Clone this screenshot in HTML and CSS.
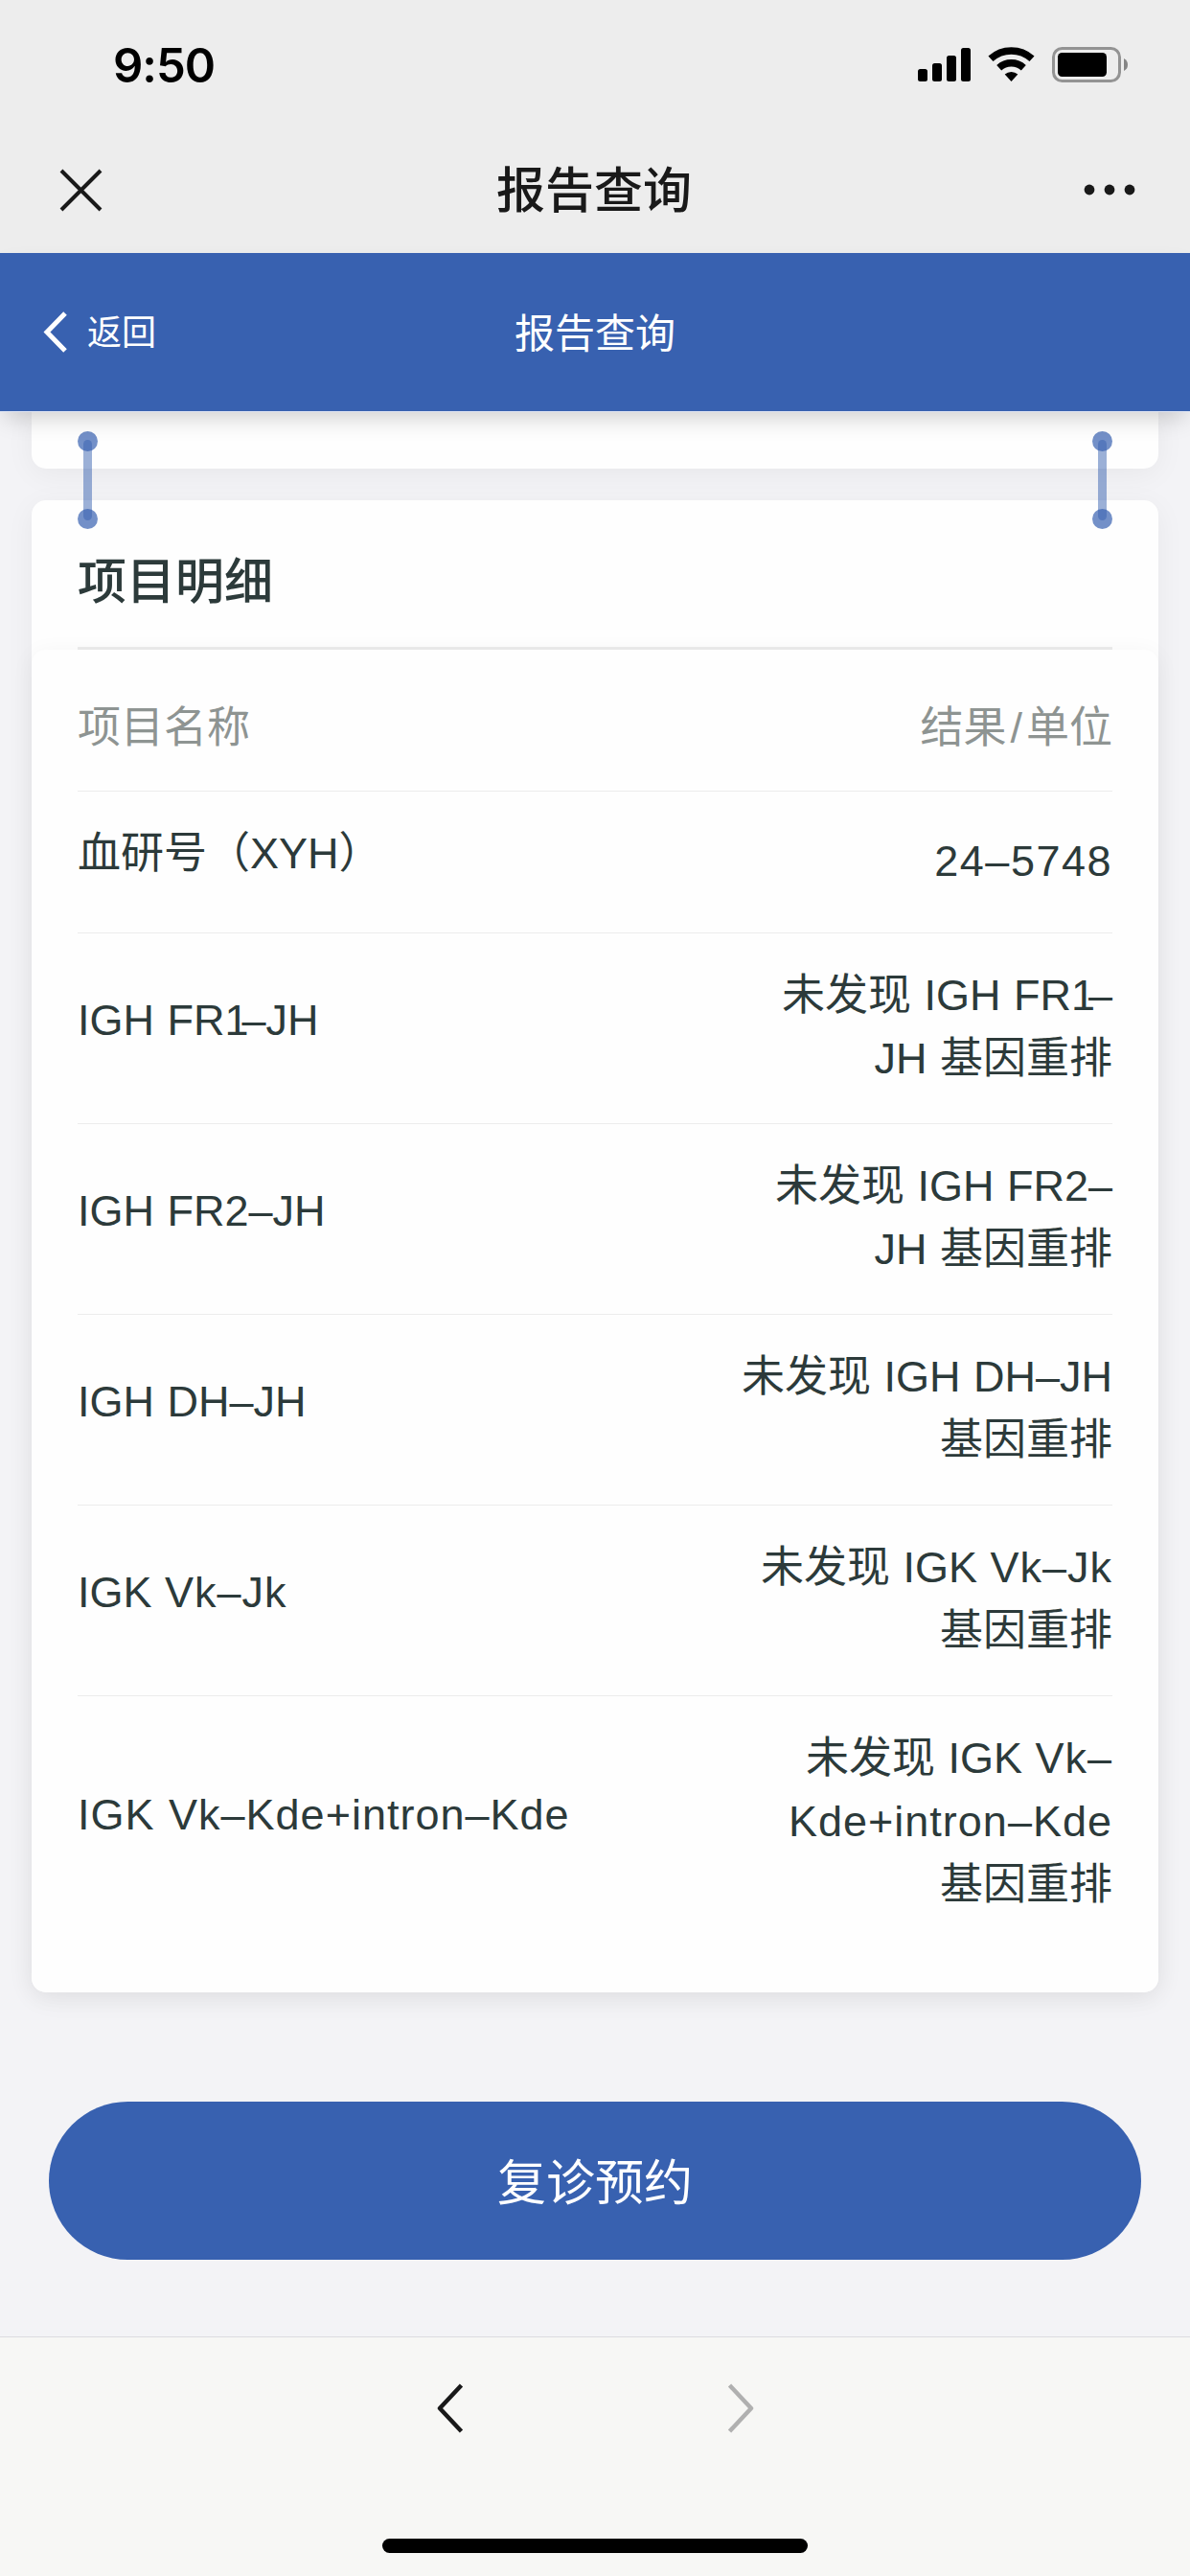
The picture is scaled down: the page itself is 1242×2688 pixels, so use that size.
FILE: index.html
```html
<!DOCTYPE html>
<html lang="zh-CN">
<head>
    <meta charset="UTF-8">
    <meta name="viewport" content="width=device-width, initial-scale=1.0">
    <title>报告查询</title>
    <link rel="stylesheet" href="styles.css">
</head>
<body>
    <div class="status-bar">
        <span class="time">9:50</span>
        <svg class="status-icons" width="220" height="38" viewBox="0 0 220 38">
            <rect x="0" y="24" width="10" height="13" rx="2.5"/>
            <rect x="15" y="18" width="10" height="19" rx="2.5"/>
            <rect x="30" y="10" width="10" height="27" rx="2.5"/>
            <rect x="45" y="2" width="10" height="35" rx="2.5"/>
            <g fill="none" stroke="#000" stroke-width="7.5">
                <path d="M76 13.3 A32 32 0 0 1 119 13.3"/>
                <path d="M84.7 22.7 A19.2 19.2 0 0 1 110.3 22.7"/>
            </g>
            <path d="M90.7 29.5 A10.5 10.5 0 0 1 104.3 29.5 L97.5 37 Z"/>
            <rect x="141.5" y="2.5" width="69" height="34" rx="9" fill="none" stroke="#939393" stroke-width="3"/>
            <rect x="146" y="7" width="51" height="25" rx="4.5"/>
            <path d="M215 13 Q219 15 219 19.5 Q219 24 215 26 Z" fill="#858585"/>
        </svg>
    </div>

    <div class="app-bar">
        <svg width="45" height="45" viewBox="0 0 45 45">
            <path d="M2 2 L43 43 M43 2 L2 43" fill="none" stroke="#191919" stroke-width="4"/>
        </svg>
        <h1>报告查询</h1>
        <svg width="56" height="12" viewBox="0 0 56 12" fill="#191919">
            <circle cx="7" cy="6" r="5.4"/>
            <circle cx="28" cy="6" r="5.4"/>
            <circle cx="49" cy="6" r="5.4"/>
        </svg>
    </div>

    <div class="nav-bar">
        <a class="back">
            <svg width="26" height="43" viewBox="0 0 26 43">
                <path d="M23 2 L4 21.5 L23 41" fill="none" stroke="#fff" stroke-width="5"/>
            </svg>
            <span>返回</span>
        </a>
        <h2>报告查询</h2>
    </div>

    <div class="content">
        <div class="card card-prev"></div>

        <div class="card">
            <div class="link link-left"></div>
            <div class="link link-right"></div>
            <h3>项目明细</h3>
            <div class="detail">
                <div class="row row-head">
                    <span>项目名称</span>
                    <span>结果<i class="slash">/</i>单位</span>
                </div>
                <div class="row">
                    <span class="name">血研号（XYH）</span>
                    <span class="value number">24–5748</span>
                </div>
                <div class="row">
                    <span class="name">IGH FR<i>1</i>–JH</span>
                    <span class="value">未发现 IGH FR<i>1</i>–<br>JH 基因重排</span>
                </div>
                <div class="row">
                    <span class="name">IGH FR2–JH</span>
                    <span class="value">未发现 IGH FR2–<br>JH 基因重排</span>
                </div>
                <div class="row">
                    <span class="name">IGH DH–JH</span>
                    <span class="value">未发现 IGH DH–JH<br>基因重排</span>
                </div>
                <div class="row">
                    <span class="name">IGK <span class="wide">Vk–Jk</span></span>
                    <span class="value">未发现 IGK <span class="wide">Vk–Jk</span><br>基因重排</span>
                </div>
                <div class="row">
                    <span class="name wide">IGK Vk–Kde+intron–Kde</span>
                    <span class="value">未发现 IGK <span class="wide">Vk–</span><br><span class="wide">Kde+intron–Kde</span><br>基因重排</span>
                </div>
            </div>
        </div>

        <button type="button" class="btn">复诊预约</button>
    </div>

    <div class="tool-bar">
        <div class="arrows">
            <svg width="28" height="52" viewBox="0 0 28 52">
                <path d="M25.5 2 L3 26 L25.5 50" fill="none" stroke="#191919" stroke-width="4.5" stroke-linejoin="round"/>
            </svg>
            <svg width="28" height="52" viewBox="0 0 28 52">
                <path d="M2.5 2 L25 26 L2.5 50" fill="none" stroke="#b0b0b0" stroke-width="4.5" stroke-linejoin="round"/>
            </svg>
        </div>
        <div class="home"></div>
    </div>
</body>
</html>
```

FILE: styles.css
```css
* {
    box-sizing: border-box;
}
body {
    margin: 0;
    height: 2688px;
    display: flex;
    flex-direction: column;
    overflow: hidden;
    background-color: #f3f3f6;
    color: #2c3a3a;
    font-family: "Liberation Sans", "Noto Sans CJK SC", sans-serif;
}
h1, h2, h3 {
    margin: 0;
}
svg {
    display: block;
}

/* system bars */
.status-bar {
    height: 132px;
    padding: 0 64px 0 118px;
    display: flex;
    justify-content: space-between;
    align-items: center;
    background-color: #ededed;
}
.time {
    font-family: Inter, sans-serif;
    font-size: 49px;
    font-weight: 600;
    color: #000;
    line-height: 60px;
    letter-spacing: -1px;
    margin-top: 6px;
}
.status-icons {
    margin-top: 2px;
}
.app-bar {
    height: 132px;
    padding: 0 56px 0 62px;
    display: flex;
    justify-content: space-between;
    align-items: center;
    background-color: #ededed;
}
.app-bar h1 {
    font-size: 51px;
    font-weight: 500;
    line-height: 60px;
    color: #191919;
    margin: 3px 0 0 3px;
}

.nav-bar {
    position: relative;
    z-index: 2;
    height: 165px;
    flex-shrink: 0;
    padding: 0 45px;
    display: grid;
    grid-template-columns: 1fr auto 1fr;
    align-items: center;
    background-color: #3861b0;
    color: #fff;
    box-shadow: 0 1px 0 #dde3f2, 0 12px 24px -6px rgba(0, 0, 0, 0.2);
}
.back {
    display: flex;
    align-items: center;
    gap: 20px;
    font-size: 36px;
}
.back span {
    margin-top: -5px;
}
.nav-bar h2 {
    font-size: 42px;
    font-weight: 400;
    margin-top: -5px;
}

/* report */
.content {
    flex: 1;
    padding: 0 33px;
}
.card {
    position: relative;
    background-color: #fefefe;
    border-radius: 15px;
    box-shadow: 0 6px 30px rgba(0, 0, 0, 0.05);
}
.card-prev {
    height: 60px;
    margin-bottom: 33px;
    border-radius: 0 0 15px 15px;
}
.card h3 {
    height: 156px;
    margin: 0 48px;
    padding-top: 22px;
    border-bottom: 3px solid #ececec;
    font-size: 51px;
    font-weight: 500;
    line-height: 128px;
}
.detail {
    padding: 0 48px 45px;
    border-radius: 15px;
    background-color: #fefefe;
    box-shadow: 0 4px 24px rgba(0, 0, 0, 0.05);
}
.row {
    min-height: 148px;
    padding: 32px 0 34px;
    display: flex;
    justify-content: space-between;
    align-items: center;
    border-bottom: 1px solid #ececec;
    font-size: 45px;
    line-height: 66px;
    word-spacing: 1px;
}
.row:last-child {
    border-bottom: none;
}
.row-head {
    color: #8e9492;
    padding: 44px 0 28px;
}
.name {
    margin-bottom: 15px;
}
.value {
    text-align: right;
}
.number {
    letter-spacing: 1.5px;
}
.wide {
    letter-spacing: 1px;
}
.row i {
    font-style: normal;
    letter-spacing: -7px;
}
.row .slash {
    margin: 0 4px;
    letter-spacing: 0;
}

/* rings that tie the two cards together */
.link {
    position: absolute;
    top: -63px;
    width: 9px;
    height: 84px;
    border-radius: 5px;
    background-color: rgba(56, 97, 176, 0.5);
    z-index: 1;
}
.link::before,
.link::after {
    content: "";
    position: absolute;
    left: -6px;
    width: 21px;
    height: 21px;
    border-radius: 50%;
    background-color: rgba(56, 97, 176, 0.7);
}
.link::before {
    top: -9px;
}
.link::after {
    bottom: -9px;
}
.link-left {
    left: 54px;
}
.link-right {
    right: 54px;
}

.btn {
    display: block;
    width: 1140px;
    height: 165px;
    margin: 114px auto 0;
    padding: 0 0 4px;
    border: none;
    border-radius: 83px;
    background-color: #3861b0;
    color: #fff;
    font-family: inherit;
    font-size: 51px;
}

.tool-bar {
    height: 250px;
    flex-shrink: 0;
    padding: 48px 0 24px;
    display: flex;
    flex-direction: column;
    justify-content: space-between;
    align-items: center;
    border-top: 1px solid #dcdce0;
    background-color: #f7f7f5;
}
.arrows {
    display: flex;
    gap: 275px;
}
.home {
    width: 444px;
    height: 15px;
    border-radius: 8px;
    background-color: #000;
}
```
